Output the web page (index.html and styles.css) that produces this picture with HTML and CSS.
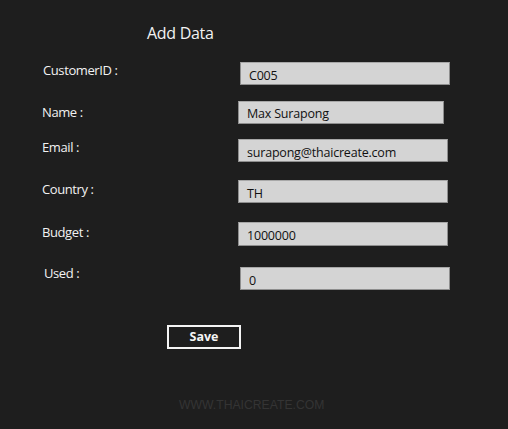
FILE: index.html
```html
<!DOCTYPE html>
<html>
<head>
<meta charset="utf-8">
<link rel="stylesheet" href="styles.css">
</head>
<body>
<div class="page">
  <h1 class="title">Add Data</h1>
  <div class="form">
    <div class="label l1">CustomerID :</div><div class="field f1">C005</div>
    <div class="label l2">Name :</div><div class="field f2">Max Surapong</div>
    <div class="label l3">Email :</div><div class="field f3">surapong@thaicreate.com</div>
    <div class="label l4">Country :</div><div class="field f4">TH</div>
    <div class="label l5">Budget :</div><div class="field f5">1000000</div>
    <div class="label l6">Used :</div><div class="field f6">0</div>
  </div>
  <div class="actions"><button class="save">Save</button></div>
  <div class="watermark">WWW.THAICREATE.COM</div>
</div>
</body>
</html>
```
FILE: styles.css
```css
html, body {
  margin: 0;
  padding: 0;
  background: #1e1e1e;
  height: 100%;
}
.page {
  font-family: "Open Sans", "Noto Sans", sans-serif;
  color: #f2f2f2;
  padding-top: 22px;
}
.title {
  margin: 0 0 0 147px;
  font-size: 16px;
  font-weight: 400;
  letter-spacing: -0.3px;
  line-height: 22px;
  height: 40px;
}
.form {
  display: grid;
  grid-template-columns: 196px 212px;
  grid-template-rows: 39px 38px 41px 42px 45px 58px;
  margin-left: 42px;
}
.label {
  font-size: 13px;
  letter-spacing: -0.4px;
  line-height: 16px;
}
.field {
  box-sizing: border-box;
  height: 23px;
  width: 210px;
  background: #d4d4d4;
  border: 1px solid #8e8e8e;
  border-top-color: #a8a8a8;
  color: #111;
  font-size: 12.5px;
  letter-spacing: -0.2px;
  line-height: 16px;
  padding: 5px 0 0 8px;
  overflow: hidden;
  white-space: nowrap;
}
.l1 { margin: 0 0 0 1px; }
.f1 { margin-left: 2px; }
.l2 { margin-top: 3px; }
.f2 { width: 206px; height: 23px; padding-top: 4px; }
.l3 { margin-top: 0; }
.l4 { margin-top: 1px; }
.l5 { margin-top: 2px; }
.f5 { height: 24px; }
.l6 { margin: -2px 0 0 2px; }
.f6 { margin-left: 2px; }
.actions {
  padding-left: 167px;
}
.save {
  box-sizing: border-box;
  width: 74px;
  height: 24px;
  background: transparent;
  border: 2px solid #f4f4f4;
  color: #f4f4f4;
  font-family: "Open Sans", "Noto Sans", sans-serif;
  font-weight: 700;
  font-size: 12.5px;
  line-height: 18px;
  padding: 0;
  display: block;
}
.watermark {
  margin: 48px 0 0 179px;
  font-family: "Liberation Sans", Arial, sans-serif;
  font-size: 12.2px;
  color: #343434;
  line-height: 16px;
}
```
